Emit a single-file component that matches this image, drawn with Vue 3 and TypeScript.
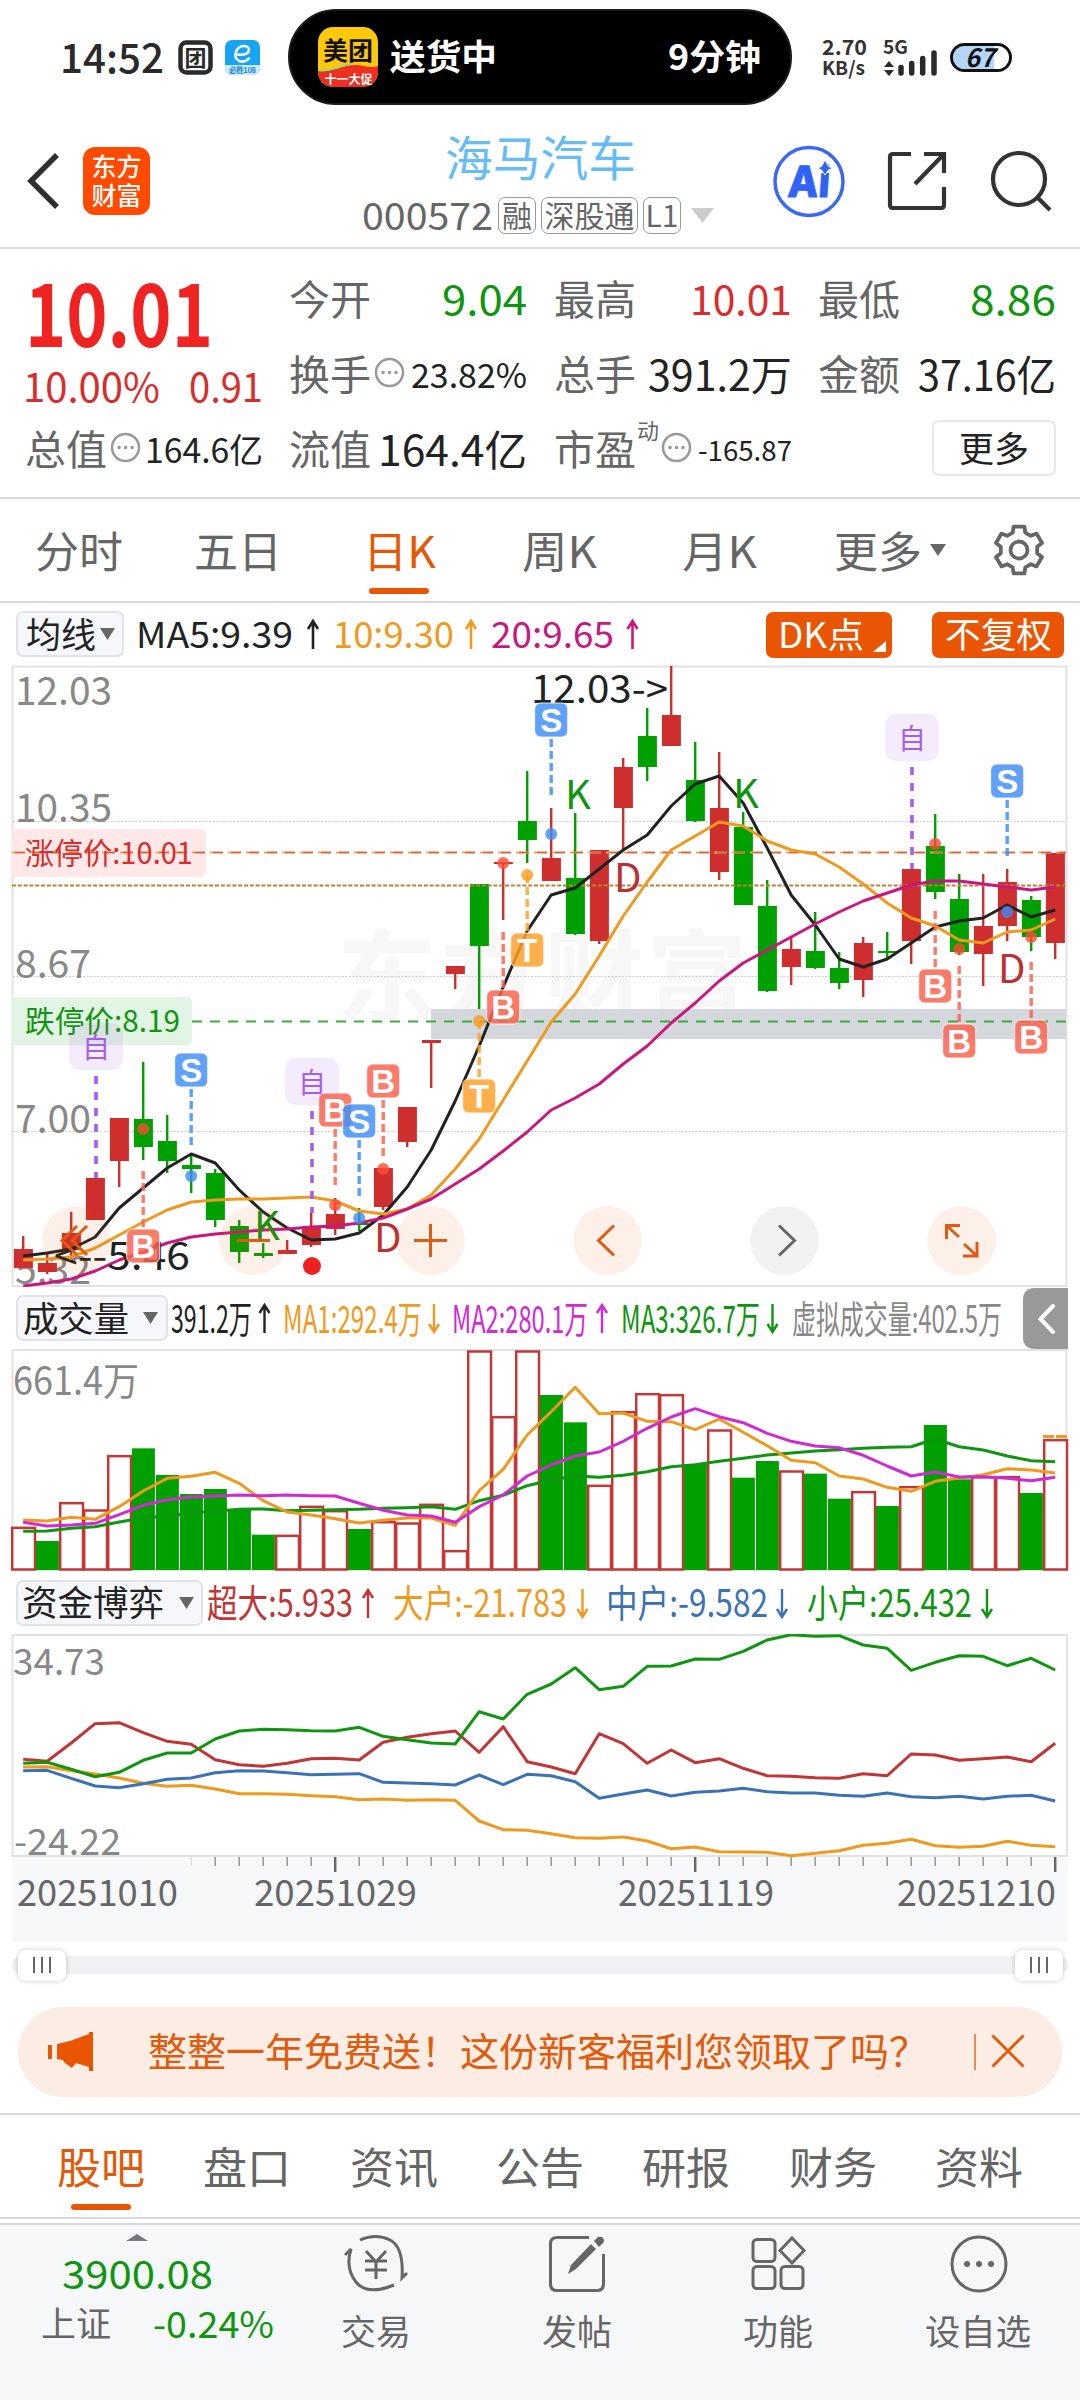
<script setup lang="ts">
import { defineComponent, h } from 'vue'

type Num = number

/* A single run of text set to an exact advance width. */
const Fit = defineComponent({
  props: {
    t: { type: String, required: true },
    w: { type: Number, required: true },
    s: { type: Number, required: true },
    c: { type: String, default: '#666' },
    b: { type: Number, default: 400 },
  },
  setup(p) {
    return () =>
      h('svg', { width: p.w, height: p.s, style: 'display:block;overflow:visible;flex:none' }, [
        h(
          'text',
          {
            x: 0,
            y: p.s * 0.88,
            fill: p.c,
            'font-size': p.s,
            'font-weight': p.b,
            textLength: p.w,
            lengthAdjust: 'spacingAndGlyphs',
          },
          p.t,
        ),
      ])
  },
})

const RED = '#cf2e2e'
const GREEN = '#00a000'
const step = 24
const x0 = 23.2
const cx = (i: Num) => +(x0 + i * step).toFixed(1)

/* [up(1)/down(0), high, bodyTop, bodyBottom, low] */
const candles: Num[][] = [
  [1, 1236, 1249, 1268, 1268], [1, 1253, 1263, 1272, 1274], [1, 1212, 1233, 1250, 1259], [1, 1178, 1178, 1220, 1220],
  [1, 1118, 1118, 1161, 1187], [0, 1062, 1119, 1147, 1160], [0, 1115, 1141, 1161, 1173], [0, 1155, 1165, 1169, 1193],
  [0, 1169, 1173, 1220, 1227], [0, 1220, 1226, 1252, 1263], [0, 1243, 1253, 1256, 1258], [1, 1240, 1250, 1254, 1254],
  [1, 1213, 1226, 1245, 1247], [1, 1198, 1214, 1229, 1235], [0, 1208, 1223, 1225, 1231], [1, 1168, 1168, 1207, 1210],
  [1, 1107, 1107, 1142, 1147], [1, 1040, 1040, 1043, 1088], [1, 966, 966, 974, 989], [0, 884, 884, 946, 1009],
  [1, 862, 862, 864, 920], [0, 771, 821, 840, 863], [1, 808, 858, 881, 881], [0, 813, 878, 934, 935],
  [1, 850, 850, 941, 944], [1, 758, 767, 808, 849], [0, 708, 736, 767, 781], [1, 666, 715, 746, 746],
  [0, 742, 780, 821, 822], [1, 752, 808, 872, 880], [0, 812, 827, 905, 905], [0, 880, 906, 991, 992],
  [1, 937, 949, 967, 985], [0, 912, 951, 968, 969], [0, 952, 968, 983, 989], [1, 937, 943, 980, 997],
  [0, 932, 951, 953, 958], [1, 869, 869, 941, 964], [0, 814, 846, 892, 899], [0, 874, 899, 952, 955],
  [1, 874, 926, 954, 986], [1, 869, 882, 926, 941], [0, 896, 900, 937, 951], [1, 853, 853, 943, 959],
]

const poly = (ys: Num[], f: (v: Num) => Num = (v) => v) => ys.map((v, i) => `${cx(i)},${f(v).toFixed(1)}`).join(' ')

const ma5 = poly([1256, 1253, 1249, 1237, 1208, 1188, 1168, 1154, 1163, 1190, 1212, 1228, 1240, 1239, 1233, 1215, 1187, 1150, 1101, 1046, 987, 931, 895, 888, 869, 850, 835, 806, 784, 776, 803, 848, 895, 925, 959, 967, 959, 943, 927, 921, 918, 905, 917, 910])
const ma10 = poly([1260, 1259, 1257, 1248, 1235, 1222, 1210, 1202, 1200, 1199, 1199, 1198, 1197, 1201, 1211, 1214, 1209, 1195, 1169, 1139, 1100, 1061, 1022, 994, 956, 916, 882, 850, 836, 822, 826, 841, 850, 854, 867, 884, 903, 918, 926, 940, 943, 932, 930, 919])
const ma20 = poly([1286, 1283, 1279, 1271, 1260, 1252, 1243, 1237, 1234, 1232, 1230, 1229, 1227, 1226, 1223, 1218, 1209, 1199, 1184, 1169, 1151, 1132, 1110, 1098, 1084, 1064, 1046, 1023, 1003, 981, 963, 950, 937, 924, 912, 901, 893, 885, 881, 881, 884, 887, 890, 887])

const K = { B: '#fb6350', S: '#418ff8', T: '#ffa028', Z: '#a55fe6' }
const DOT = { B: '#fa4b32', S: '#3c8cf5', T: '#fa9b1e', Z: '#a55fe6' }
type Mark = { k: 'B' | 'S' | 'T'; i: Num; y: Num; a: Num; b: Num; d: Num }
const marks: Mark[] = [
  { k: 'B', i: 5, y: 1246, a: 1171, b: 1227, d: 1129 },
  { k: 'S', i: 7, y: 1070, a: 1089, b: 1147, d: 1176 },
  { k: 'B', i: 13, y: 1110, a: 1129, b: 1186, d: 1205 },
  { k: 'S', i: 14, y: 1121, a: 1140, b: 1196, d: 1218 },
  { k: 'B', i: 15, y: 1081, a: 1100, b: 1156, d: 1169 },
  { k: 'T', i: 21, y: 950, a: 875, b: 931, d: 875 },
  { k: 'T', i: 19, y: 1096, a: 1021, b: 1077, d: 1021 },
  { k: 'B', i: 20, y: 1007, a: 932, b: 988, d: 863 },
  { k: 'S', i: 22, y: 720, a: 739, b: 795, d: 834 },
  { k: 'S', i: 41, y: 781, a: 800, b: 856, d: 912 },
  { k: 'B', i: 38, y: 986, a: 911, b: 967, d: 844 },
  { k: 'B', i: 39, y: 1041, a: 966, b: 1022, d: 949 },
  { k: 'B', i: 42, y: 1037, a: 962, b: 1018, d: 937 },
]
const notes = [
  { x: 96, top: 1023, end: 1178 },
  { x: 312, top: 1058, end: 1213 },
  { x: 912, top: 714, end: 869 },
]
const letters = [
  { t: 'K', x: 254, y: 1240 }, { t: 'K', x: 565, y: 809 }, { t: 'K', x: 733, y: 808 },
  { t: 'D', x: 374, y: 1252 }, { t: 'D', x: 614, y: 892 }, { t: 'D', x: 998, y: 983 },
]
const axis = [
  { t: '12.03', y: 705, w: 97 }, { t: '10.35', y: 822, w: 97 }, { t: '8.67', y: 978, w: 76 },
  { t: '7.00', y: 1133, w: 76 }, { t: '5.32', y: 1284, w: 76 },
]

/* volume: [up/down, top offset] where y = 1340 + v / 3 */
const third = (o: Num) => (v: Num) => o + v / 3
const vy = third(1340)
const vols: Num[][] = [
  [1, 562], [0, 603], [1, 488], [1, 510], [1, 347], [0, 325], [0, 405], [0, 462], [0, 447], [0, 508], [0, 584], [1, 586],
  [1, 499], [1, 512], [0, 567], [1, 545], [1, 549], [1, 493], [1, 632], [1, 33], [1, 230], [1, 33], [0, 165], [0, 247],
  [1, 436], [1, 215], [1, 161], [1, 164], [0, 372], [1, 270], [0, 413], [0, 363], [1, 393], [0, 401], [0, 476], [1, 455],
  [0, 498], [1, 440], [0, 255], [0, 418], [1, 410], [1, 410], [0, 459], [1, 299],
]
const v1 = poly([540, 543, 532, 538, 500, 453, 415, 409, 397, 430, 482, 516, 525, 536, 549, 541, 534, 534, 556, 452, 388, 285, 215, 142, 221, 219, 244, 245, 269, 237, 277, 317, 361, 368, 408, 417, 442, 454, 424, 414, 404, 386, 390, 399], vy)
const v2 = poly([547, 558, 555, 550, 524, 496, 479, 471, 468, 465, 467, 465, 467, 468, 490, 511, 525, 528, 547, 500, 465, 408, 375, 348, 336, 304, 265, 231, 206, 230, 248, 280, 304, 318, 323, 346, 378, 408, 396, 411, 410, 415, 422, 412], vy)
const v3 = poly([574, 573, 565, 560, 546, 534, 528, 519, 514, 508, 507, 512, 511, 509, 508, 505, 503, 500, 508, 482, 466, 437, 420, 408, 412, 406, 395, 380, 374, 364, 355, 345, 339, 333, 329, 325, 322, 320, 297, 320, 330, 348, 362, 365], vy)

const fy = third(1620)
const funds = [
  { c: '#ef9a1e', p: poly([441, 440, 452, 462, 474, 490, 499, 496, 507, 521, 521, 523, 527, 530, 539, 537, 541, 539, 541, 603, 629, 631, 641, 653, 655, 651, 663, 686, 681, 695, 696, 697, 707, 700, 692, 676, 670, 658, 677, 682, 679, 664, 676, 680], fy) },
  { c: '#3b72b4', p: poly([452, 451, 475, 498, 503, 491, 478, 474, 458, 452, 453, 458, 464, 463, 461, 487, 489, 491, 495, 465, 494, 463, 467, 485, 535, 522, 510, 528, 517, 513, 505, 515, 519, 519, 526, 529, 519, 530, 533, 529, 537, 529, 526, 543], fy) },
  { c: '#c03535', p: poly([418, 424, 369, 311, 308, 338, 364, 373, 419, 434, 439, 430, 416, 415, 420, 367, 352, 341, 333, 397, 320, 425, 441, 461, 341, 371, 430, 390, 428, 416, 445, 467, 469, 473, 475, 461, 467, 402, 405, 421, 416, 411, 425, 370], fy) },
  { c: '#109510', p: poly([430, 427, 448, 470, 457, 421, 399, 399, 357, 333, 328, 329, 332, 333, 322, 349, 359, 369, 372, 275, 297, 223, 192, 143, 209, 199, 139, 138, 117, 118, 94, 60, 44, 49, 47, 75, 85, 151, 127, 107, 109, 137, 115, 150], fy) },
]
const ticks = Array.from({ length: 37 }, (_, n) => n + 7)
const dates = [
  { t: '20251010', x: 17, w: 161 }, { t: '20251029', x: 254, w: 163 }, { t: '20251119', x: 618, w: 156 }, { t: '20251210', x: 897, w: 159 },
]

type Leg = { t: string; x: Num; w: Num; c: string; a?: 'u' | 'd'; ax?: Num }
const maLegend: Leg[] = [
  { t: 'MA5:9.39', x: 136, w: 157, c: '#222', a: 'u', ax: 313 },
  { t: '10:9.30', x: 333, w: 121, c: '#ef9a1e', a: 'u', ax: 471 },
  { t: '20:9.65', x: 491, w: 123, c: '#c8177f', a: 'u', ax: 632.5 },
]
const volLegend: Leg[] = [
  { t: '391.2万', x: 171, w: 81, c: '#222', a: 'u', ax: 264.5 },
  { t: 'MA1:292.4万', x: 283, w: 139, c: '#ef9a1e', a: 'd', ax: 434 },
  { t: 'MA2:280.1万', x: 452, w: 136, c: '#cf2bd2', a: 'u', ax: 602 },
  { t: 'MA3:326.7万', x: 621, w: 139, c: '#109510', a: 'd', ax: 772.5 },
  { t: '虚拟成交量:402.5万', x: 792, w: 210, c: '#888' },
]
const fundLegend: Leg[] = [
  { t: '超大:5.933', x: 207, w: 146, c: '#c03535', a: 'u', ax: 368 },
  { t: '大户:-21.783', x: 393, w: 174, c: '#ef9a1e', a: 'd', ax: 582.5 },
  { t: '中户:-9.582', x: 606, w: 162, c: '#3b72b4', a: 'd', ax: 782 },
  { t: '小户:25.432', x: 807, w: 165, c: '#109510', a: 'd', ax: 987 },
]
const arrow = (d: string, x: Num, base: Num) =>
  d === 'u' ? `M${x},${base + 1}V${base - 26}M${x - 5},${base - 19}L${x},${base - 27}L${x + 5},${base - 19}`
            : `M${x},${base - 28}V${base - 1}M${x - 5},${base - 8}L${x},${base}L${x + 5},${base - 8}`

const periods = [
  { t: '分时', w: 88, g: 35 }, { t: '五日', w: 88, g: 71 }, { t: '日K', w: 73, g: 81, on: true },
  { t: '周K', w: 75, g: 86 }, { t: '月K', w: 75, g: 85 }, { t: '更多', w: 88, g: 77 },
]
const gear = Array.from({ length: 6 }, (_, k) => {
  const pt = (r: Num, deg: Num) => {
    const a = ((k * 60 - 90 + deg) * Math.PI) / 180
    return `${(r * Math.cos(a)).toFixed(1)},${(r * Math.sin(a)).toFixed(1)}`
  }
  return [pt(18.5, -20), pt(24, -13), pt(24, 13), pt(18.5, 20)].join(' ')
}).join(' ')

const cols = [
  [
    { l: '今开', v: '9.04', w: 85, s: 41, c: '#109510' },
    { l: '换手', info: true, v: '23.82%', w: 116, s: 34, c: '#222' },
    { l: '流值', v: '164.4亿', w: 149, s: 42, c: '#222' },
  ],
  [
    { l: '最高', v: '10.01', w: 102, s: 41, c: '#d92c2c' },
    { l: '总手', v: '391.2万', w: 144, s: 42, c: '#222' },
    { l: '市盈', sup: '动', info: true, v: '-165.87', w: 94, s: 28, c: '#222' },
  ],
  [
    { l: '最低', v: '8.86', w: 86, s: 41, c: '#109510' },
    { l: '金额', v: '37.16亿', w: 138, s: 42, c: '#222' },
    { l: '', v: '更多', w: 70, s: 35, c: '#222' },
  ],
]
const sections = ['股吧', '盘口', '资讯', '公告', '研报', '财务', '资料']
</script>

<template>
  <main class="page">
    <div class="status">
      <Fit class="time" t="14:52" :w="104" :s="41" c="#2a2a2a" :b="500" />
      <svg class="st-a" width="35" height="35" viewBox="0 0 35 35">
        <rect x="2.5" y="2.5" width="30" height="30" rx="6" fill="none" stroke="#2a2a2a" stroke-width="4.5" />
        <text x="6.5" y="25.5" font-size="22" font-weight="700" fill="#2a2a2a">团</text>
      </svg>
      <svg class="st-b" width="35" height="35" viewBox="0 0 35 35">
        <rect width="35" height="35" rx="7" fill="#16a5f3" />
        <path d="M0 25H35V28a7 7 0 0 1-7 7H7a7 7 0 0 1-7-7Z" fill="#cdeaf9" />
        <path d="M12 14.5c8 1 12-1 12-5s-10-6.500-13 2.500 7 12.500 13 6.500" fill="none" stroke="#fff" stroke-width="2.500" stroke-linecap="round" />
        <text x="4" y="33" font-size="7.500" font-weight="700" fill="#1688d8" textLength="27">必胜108</text>
      </svg>
      <div class="island">
        <svg width="60" height="60" viewBox="0 0 60 60">
          <rect width="60" height="60" rx="15" fill="#ffc90a" />
          <path d="M0 44C14 46 24 38 36 38S50 42 60 39V45a15 15 0 0 1-15 15H15A15 15 0 0 1 0 45Z" fill="#ec2f1e" />
          <path d="M0 43C14 45 22 37 35 37" fill="none" stroke="#9edb6a" stroke-width="2" />
          <text x="5" y="33" font-size="25" font-weight="700" fill="#111" textLength="50">美团</text>
          <text x="6.500" y="56.500" font-size="12" font-weight="700" fill="#fff" textLength="48">十一大促</text>
        </svg>
        <Fit class="isl-t" t="送货中" :w="107" :s="35.500" c="#fff" :b="700" />
        <Fit class="isl-m" t="9分钟" :w="93" :s="35.500" c="#fff" :b="700" />
      </div>
      <div class="net">
        <Fit t="2.70" :w="45" :s="21" c="#333" :b="700" />
        <Fit t="KB/s" :w="43" :s="19" c="#333" :b="700" />
      </div>
      <svg class="signal" width="54" height="44" viewBox="884 35 54 44">
        <text x="883" y="54" font-size="19" font-weight="700" fill="#333" textLength="25" lengthAdjust="spacingAndGlyphs">5G</text>
        <path d="M889 61l5 6h-10zM889 76l5-6h-10z" fill="#2a2a2a" />
        <path d="M901 67.500V73M911.700 63.500V73M922.700 58.500V73M934 53V73" stroke="#2a2a2a" stroke-width="5.500" stroke-linecap="round" />
      </svg>
      <svg class="battery" width="62" height="29" viewBox="0 0 62 29">
        <rect x="1.500" y="1.500" width="59" height="26" rx="13" fill="#fff" />
        <path d="M14.500 1.500H44V27.500H14.500a13 13 0 0 1 0-26Z" fill="#b4d6fa" />
        <rect x="1.500" y="1.500" width="59" height="26" rx="13" fill="none" stroke="#111" stroke-width="3" />
        <text x="15" y="24" font-size="26" font-weight="700" font-style="italic" fill="#111" textLength="30" lengthAdjust="spacingAndGlyphs">67</text>
      </svg>
    </div>

    <header class="head">
      <div class="head-l">
        <svg class="back" width="34" height="58" viewBox="0 0 34 58"><path d="M31 3L5 29L31 55" fill="none" stroke="#2f2f2f" stroke-width="5.500" /></svg>
        <svg width="67" height="68" viewBox="0 0 67 68">
          <rect width="67" height="68" rx="12" fill="#ff4a00" />
          <text x="8.500" y="28.500" font-size="25" font-weight="500" fill="#fff" textLength="50">东方</text>
          <text x="8.500" y="58" font-size="25" font-weight="500" fill="#fff" textLength="50">财富</text>
        </svg>
      </div>
      <div class="head-m">
        <Fit t="海马汽车" :w="191" :s="47.500" c="#66bdf5" />
        <div class="code">
          <Fit t="000572" :w="131" :s="38" c="#666" />
          <span class="tag t1">融</span><span class="tag t3">深股通</span><span class="tag t2">L1</span>
          <svg class="drop" width="23" height="15"><path d="M0 0H23L11.500 15Z" fill="#ccc" /></svg>
        </div>
      </div>
      <div class="head-r">
        <svg width="72" height="73" viewBox="0 0 72 73">
          <circle cx="36" cy="36.500" r="34" fill="#fff" stroke="#3a68f2" stroke-width="3.500" />
          <text class="ai" transform="translate(14 52) skewX(-4)" font-size="43" font-weight="800" fill="#2f63f5" stroke="#2f63f5" stroke-width="1" textLength="42" lengthAdjust="spacingAndGlyphs">Ai</text>
          <path d="M52 15l3.500 6.500 4.500 1.500-4.500 2-3.500 5-3.500-5-4-2 4-1.500z" fill="#2f63f5" stroke="#fff" stroke-width="1" />
        </svg>
        <svg class="share" width="60" height="60" viewBox="-30 -30 60 60" fill="none" stroke="#333" stroke-width="4.200">
          <path d="M-6-27H-24q-3 0-3 3V24q0 3 3 3H24q3 0 3-3V6M-2 3L26-26M7-27H27V-8" />
        </svg>
        <svg class="find" width="64" height="62" viewBox="0 0 64 62" fill="none" stroke="#333" stroke-width="4.200">
          <circle cx="29" cy="29" r="26" /><path d="M47 47L60 60" />
        </svg>
      </div>
    </header>

    <section class="quote">
      <div class="qcol q0">
        <div class="price"><Fit t="10.01" :w="188" :s="87" c="#f02323" :b="700" /></div>
        <div class="chg"><Fit t="10.00%" :w="137" :s="40" c="#d92c2c" /><Fit t="0.91" :w="74" :s="40" c="#d92c2c" /></div>
        <div class="cell">
          <Fit t="总值" :w="82" :s="41" />
          <svg class="info" width="31" height="31" viewBox="0 0 31 31"><circle cx="15.500" cy="15.500" r="13.500" fill="none" stroke="#999" stroke-width="2.500" /><path d="M9 15.500h.1M15.500 15.500h.1M22 15.500h.1" stroke="#999" stroke-width="3.500" stroke-linecap="round" /></svg>
          <Fit class="val" t="164.6亿" :w="118" :s="34" c="#222" />
        </div>
      </div>
      <div v-for="(col, k) in cols" :key="k" class="qcol">
        <div v-for="r in col" :key="r.v" class="cell">
          <template v-if="r.l">
            <Fit :t="r.l" :w="82" :s="41" />
            <Fit v-if="r.sup" class="sup" :t="r.sup" :w="22" :s="22" />
            <svg v-if="r.info" class="info" width="31" height="31" viewBox="0 0 31 31"><circle cx="15.500" cy="15.500" r="13.500" fill="none" stroke="#999" stroke-width="2.500" /><path d="M9 15.500h.1M15.500 15.500h.1M22 15.500h.1" stroke="#999" stroke-width="3.500" stroke-linecap="round" /></svg>
            <Fit class="val" :t="r.v" :w="r.w" :s="r.s" :c="r.c" />
          </template>
          <button v-else class="more"><Fit :t="r.v" :w="r.w" :s="r.s" :c="r.c" /></button>
        </div>
      </div>
    </section>

    <nav class="periods">
      <div v-for="p in periods" :key="p.t" class="period" :class="{ on: p.on }" :style="{ marginLeft: p.g + 'px' }">
        <Fit :t="p.t" :w="p.w" :s="43.500" :c="p.on ? '#e45807' : '#666'" />
      </div>
      <svg class="tri" width="16" height="12"><path d="M0 0H16L8 12Z" fill="#666" /></svg>
      <svg class="gear" width="52" height="56" viewBox="-26 -28 52 56" fill="none" stroke="#666" stroke-width="3.800" stroke-linejoin="round">
        <polygon :points="gear" /><circle r="8.500" />
      </svg>
    </nav>

    <div class="legend l1">
      <button class="pick p1"><Fit t="均线" :w="70" :s="35" c="#222" /><svg width="15" height="12"><path d="M0 0H15L7.500 12Z" fill="#666" /></svg></button>
      <svg class="legend-t" width="634" height="62" viewBox="132 603 634 62">
        <g v-for="g in maLegend" :key="g.t">
          <text :x="g.x" y="648" font-size="36" :fill="g.c" :textLength="g.w" lengthAdjust="spacingAndGlyphs">{{ g.t }}</text>
          <path :d="arrow(g.a!, g.ax!, 648)" :stroke="g.c" stroke-width="2.600" fill="none" />
        </g>
      </svg>
      <button class="solid dk"><Fit t="DK点" :w="86" :s="35" c="#fff" /><svg width="13" height="11"><path d="M13 0V11H0Z" fill="#fff" /></svg></button>
      <button class="solid fq"><Fit t="不复权" :w="107" :s="35" c="#fff" /></button>
    </div>

    <svg class="chart" width="1080" height="622" viewBox="0 665 1080 622">
      <text x="337" y="1014" font-size="100" font-weight="700" fill="#f7f7f7" textLength="410">东方财富</text>
      <path d="M12.500 1286V666.500H1066.500V1286Z" fill="none" stroke="#e2e2e2" stroke-width="2" />
      <path d="M13 821.500H1066M13 976.500H1066M13 1131.500H1066" stroke="#ccc" stroke-width="1" stroke-dasharray="2 1.500" />
      <rect x="431" y="1009" width="635" height="30" fill="#d4d7dc" />
      <path d="M192 1021.500H1066" stroke="#3cab3c" stroke-width="1.800" stroke-dasharray="10 8" />
      <path d="M12 829H200q6 0 6 6V871q0 6-6 6H12Z" fill="#fee8e8" />
      <path d="M12 997H186q6 0 6 6V1039q0 6-6 6H12Z" fill="#e2f4e4" />
      <text v-for="a in axis" :key="a.t" x="15" :y="a.y" font-size="39.500" fill="#888" :textLength="a.w" lengthAdjust="spacingAndGlyphs">{{ a.t }}</text>

      <text x="531" y="703" font-size="39" fill="#222" textLength="137" lengthAdjust="spacingAndGlyphs">12.03-&gt;</text>
      <g v-for="(k, i) in candles" :key="i" :fill="k[0] ? RED : GREEN">
        <rect :x="cx(i) - 1.200" :y="k[1]" width="2.400" :height="k[4] - k[1]" />
        <rect :x="cx(i) - 9.300" :y="k[2]" width="19" :height="k[3] - k[2]" />
      </g>
      <path d="M12 852.500H1066" stroke="#e0ae68" stroke-width="1.800" stroke-dasharray="13 5" />
      <path d="M12 852.500H1066" stroke="#d95540" stroke-opacity=".85" stroke-width="1.500" stroke-dasharray="10 8" stroke-dashoffset="-3" />
      <path d="M12 885.500H1066" stroke="#bb8136" stroke-width="1.800" stroke-dasharray="4 1.800" />
      <text x="25" y="864" font-size="30" fill="#d92c2c" textLength="168" lengthAdjust="spacingAndGlyphs">涨停价:10.01</text>
      <text x="25" y="1032" font-size="30" fill="#109510" textLength="155" lengthAdjust="spacingAndGlyphs">跌停价:8.19</text>

      <g fill="none" stroke-width="3" stroke-linejoin="round">
        <polyline :points="ma5" stroke="#222" />
        <polyline :points="ma10" stroke="#ef9a1e" />
        <polyline :points="ma20" stroke="#c8177f" />
      </g>
      <text x="54" y="1270" font-size="39" fill="#222" textLength="136" lengthAdjust="spacingAndGlyphs">&lt;--5.46</text>
      <circle cx="312" cy="1266" r="9" fill="#f02020" />
      <text v-for="(l, n) in letters" :key="n" :x="l.x" :y="l.y" font-size="40" :fill="l.t === 'K' ? '#109510' : '#bb3030'">{{ l.t }}</text>

      <g v-for="n in notes" :key="n.x">
        <rect :x="n.x - 27" :y="n.top" width="54" height="47" rx="11" fill="#a55fe6" fill-opacity=".12" />
        <text :x="n.x - 14" :y="n.top + 35" font-size="28" fill="#a55fe6">自</text>
        <path :d="`M${n.x},${n.top + 53}V${n.end}`" stroke="#a55fe6" stroke-width="3.600" stroke-dasharray="8 8" />
      </g>
      <g v-for="m in marks" :key="m.k + m.i">
        <path :d="`M${cx(m.i)},${m.a}V${m.b}`" :stroke="K[m.k]" stroke-opacity=".85" stroke-width="3.400" stroke-dasharray="8 4" />
        <circle :cx="cx(m.i)" :cy="m.d" r="6" :fill="DOT[m.k]" fill-opacity=".8" />
        <rect :x="cx(m.i) - 16.500" :y="m.y - 17" width="33" height="34" rx="6" :fill="K[m.k]" fill-opacity=".84" stroke="#fff" stroke-opacity=".8" stroke-width="1" />
        <text class="latin" :x="cx(m.i)" :y="m.y + 11.500" font-size="33" font-weight="700" fill="#fff" text-anchor="middle">{{ m.k }}</text>
      </g>

      <g fill="#ea5504" fill-opacity=".09">
        <circle cx="76" cy="1240.500" r="34.300" /><circle cx="253" cy="1240.500" r="34.300" /><circle cx="430.500" cy="1240.500" r="34.300" />
        <circle cx="607.500" cy="1240.500" r="34.300" /><circle cx="961.500" cy="1240.500" r="34.300" />
      </g>
      <circle cx="784.500" cy="1240.500" r="34.300" fill="#f2f2f2" />
      <g fill="none" stroke="#e05a14" stroke-width="3">
        <path d="M77 1226L62 1240.500L77 1255M87 1226L72 1240.500L87 1255" />
        <path d="M237 1240.500H270M414 1240.500H447M430.500 1224V1257" />
        <path d="M614 1225.500L598.500 1240.500L614 1255.500" />
        <path d="M959 1237L946.500 1225.500M946.500 1239V1225.500H960M964 1244L977 1256M977 1242V1256H963" />
      </g>
      <path d="M779 1225.500L794.500 1240.500L779 1255.500" fill="none" stroke="#666" stroke-width="3" />
    </svg>

    <div class="legend l2">
      <button class="pick p2"><Fit t="成交量" :w="106" :s="35" c="#222" /><svg width="15" height="12"><path d="M0 0H15L7.500 12Z" fill="#666" /></svg></button>
      <svg class="legend-t" width="855" height="62" viewBox="168 1287 855 62">
        <g v-for="g in volLegend" :key="g.t">
          <text :x="g.x" y="1333" font-size="38" :fill="g.c" :textLength="g.w" lengthAdjust="spacingAndGlyphs">{{ g.t }}</text>
          <path v-if="g.a" :d="arrow(g.a, g.ax!, 1332)" :stroke="g.c" stroke-width="2.400" fill="none" />
        </g>
      </svg>
      <svg width="45" height="62" viewBox="0 0 45 62"><path d="M45 1V62H12Q0 62 0 50V13Q0 1 12 1Z" fill="#999" /><path d="M30 19L17.500 32L30 45" fill="none" stroke="#fff" stroke-width="4" stroke-linecap="round" /></svg>
    </div>

    <svg class="chart" width="1080" height="222" viewBox="0 1349 1080 222">
      <path d="M12.500 1570V1350H1066.500V1570Z" fill="none" stroke="#e2e2e2" stroke-width="2" />
      <text x="13" y="1395" font-size="39" fill="#888" textLength="126" lengthAdjust="spacingAndGlyphs">661.4万</text>
      <template v-for="(v, i) in vols" :key="i">
        <rect v-if="v[0]" :x="cx(i) - 11" :y="vy(v[1]) + .5" width="22.800" :height="1569 - vy(v[1])" fill="#fff" stroke="#c23838" stroke-width="2.500" />
        <rect v-else :x="cx(i) - 11.300" :y="vy(v[1])" width="23" :height="1570 - vy(v[1])" :fill="GREEN" />
      </template>
      <path d="M1043 1436.500H1054M1056 1436.500H1067" stroke="#ef9a1e" stroke-width="3" />
      <g fill="none" stroke-width="3" stroke-linejoin="round">
        <polyline :points="v3" stroke="#109510" />
        <polyline :points="v1" stroke="#ef9a1e" />
        <polyline :points="v2" stroke="#cf2bd2" />
      </g>
    </svg>

    <div class="legend l3">
      <button class="pick p3"><Fit t="资金博弈" :w="142" :s="35" c="#222" /><svg width="15" height="12"><path d="M0 0H15L7.500 12Z" fill="#666" /></svg></button>
      <svg class="legend-t" width="855" height="63" viewBox="203 1571 855 63">
        <g v-for="g in fundLegend" :key="g.t">
          <text :x="g.x" y="1617" font-size="38" :fill="g.c" :textLength="g.w" lengthAdjust="spacingAndGlyphs">{{ g.t }}</text>
          <path :d="arrow(g.a!, g.ax!, 1617)" :stroke="g.c" stroke-width="2.400" fill="none" />
        </g>
      </svg>
    </div>

    <svg class="chart" width="1080" height="307" viewBox="0 1634 1080 307">
      <rect x="12" y="1857" width="1056" height="84" fill="#f7f8fa" />
      <path d="M12.500 1856V1635H1067V1856Z" fill="none" stroke="#e2e2e2" stroke-width="2" />
      <text x="13" y="1675" font-size="37" fill="#888" textLength="92" lengthAdjust="spacingAndGlyphs">34.73</text>
      <text x="14" y="1855" font-size="37" fill="#888" textLength="107" lengthAdjust="spacingAndGlyphs">-24.22</text>
      <polyline v-for="f in funds" :key="f.c" :points="f.p" fill="none" :stroke="f.c" stroke-width="3" stroke-linejoin="round" />
      <path v-for="i in ticks" :key="i" :d="`M${cx(i)},1857v${i % 15 === 13 ? 15 : 9}`" :stroke="i % 15 === 13 ? '#666' : i === 7 ? '#ddd' : '#888'" :stroke-width="i % 15 === 13 ? 2.5 : 1.3" />
      <text v-for="d in dates" :key="d.t" :x="d.x" y="1906" font-size="37" fill="#666" :textLength="d.w" lengthAdjust="spacingAndGlyphs">{{ d.t }}</text>
    </svg>

    <div class="slider">
      <div class="track">
        <div class="knob"><i></i><i></i><i></i></div>
        <div class="knob"><i></i><i></i><i></i></div>
      </div>
    </div>

    <div class="banner">
      <svg width="46" height="40" viewBox="48 2032 46 40" fill="#ea5504"><path d="M48 2045h4v14h-4zM57 2044L70 2041L89 2034V2032H93V2071H89V2067L76 2063L72 2068L65 2063L63 2060L57 2059Z" /></svg>
      <Fit class="promo" t="整整一年免费送！这份新客福利您领取了吗？" :w="780" :s="39" c="#e25a0c" />
      <i class="sep"></i>
      <svg class="close" width="34" height="34" viewBox="0 0 34 34"><path d="M1.500 1.500L32.500 32.500M32.500 1.500L1.500 32.500" stroke="#e25a0c" stroke-width="3" /></svg>
    </div>

    <nav class="sections">
      <div v-for="(s, i) in sections" :key="s" class="sect" :class="{ on: i === 0 }">
        <Fit :t="s" :w="88" :s="43.500" :c="i === 0 ? '#e45807' : '#666'" />
      </div>
    </nav>

    <footer class="dock">
      <div class="index">
        <svg width="22" height="7"><path d="M0 7H22L11 0Z" fill="#777780" /></svg>
        <Fit class="ix" t="3900.08" :w="151" :s="39" c="#109510" />
        <div class="ixrow"><Fit t="上证" :w="70" :s="35" /><Fit t="-0.24%" :w="121" :s="37" c="#109510" /></div>
      </div>
      <div class="act">
        <svg viewBox="-34 -34 68 68"><path d="M-31-9L-25-15Q-31 4-20 18T18 21M-16-24Q0-31 14-24T26 14L31 9M-10-13L0-2L10-13M-11-3H11M-11 6H11M0-2V15" /></svg>
        <Fit t="交易" :w="70" :s="35" />
      </div>
      <div class="act">
        <svg viewBox="-34 -34 68 68"><path d="M12-26.500H-20q-6.500 0-6.500 6.500V20q0 6.500 6.500 6.500H20q6.500 0 6.500-6.500V-10" /><path class="f" d="M-9 10L-6 1L14-20L19-15L-1 5ZM17-23L21-27Q24-28 26-26Q28-23 26-21L22-17Z" /></svg>
        <Fit t="发帖" :w="70" :s="35" />
      </div>
      <div class="act">
        <svg viewBox="-34 -34 68 68"><rect x="-25" y="-24.500" width="22" height="22" rx="4" /><rect x="-25" y="2.500" width="22" height="22" rx="4" /><rect x="3" y="2.500" width="22" height="22" rx="4" /><path d="M14-26L26-13.500L14-1L2-13.500Z" /></svg>
        <Fit t="功能" :w="70" :s="35" />
      </div>
      <div class="act last">
        <svg viewBox="-34 -34 68 68"><circle r="27" /><path class="f" d="M-15 0a3 3 0 0 1 6 0a3 3 0 0 1-6 0M-3 0a3 3 0 0 1 6 0a3 3 0 0 1-6 0M9 0a3 3 0 0 1 6 0a3 3 0 0 1-6 0" /></svg>
        <Fit t="设自选" :w="106" :s="35" />
      </div>
    </footer>
  </main>
</template>

<style>
body { background: #fff; }
</style>

<style scoped>
.page { width: 1080px; height: 2400px; overflow: hidden; background: #fff; font-family: "Noto Sans CJK SC", "Noto Sans", sans-serif; display: flex; flex-direction: column; }
.page > * { flex: none; }
svg { display: block; flex: none; }
button { font: inherit; margin: 0; padding: 0; border: 0; background: none; box-sizing: border-box; display: flex; align-items: center; }
.latin { font-family: "Liberation Sans", Arial, sans-serif; }
.ai { font-family: Inter, sans-serif; }

.status { height: 105px; padding-top: 9px; box-sizing: border-box; display: flex; align-items: center; padding-left: 60px; }
.st-a { margin-left: 14px; }
.st-b { margin-left: 12px; }
.island { width: 504px; height: 96px; box-sizing: border-box; border-radius: 48px; background: #000; border: 2px solid #1c1c1c; margin-left: 28px; padding: 0 29px 0 28px; display: flex; align-items: center; }
.isl-t { margin-left: 12px; }
.isl-m { margin-left: auto; }
.net { margin-left: 30px; width: 46px; display: flex; flex-direction: column; }
.signal { margin-left: 16px; overflow: visible; }
.battery { margin-left: 12px; }

.head { height: 144px; box-sizing: border-box; border-bottom: 2px solid #d9d9d9; display: flex; padding-top: 4px; }
.head-l { width: 362px; height: 144px; display: flex; align-items: center; padding-left: 26px; box-sizing: border-box; }
.back { margin-right: 23px; }
.head-m { width: 356px; display: flex; flex-direction: column; align-items: center; padding-top: 25px; }
.code { display: flex; align-items: center; height: 38px; width: 356px; margin-top: 15px; }
.tag { box-sizing: border-box; height: 37px; border: 1.5px solid #999; border-radius: 7px; color: #666; font-size: 30px; line-height: 33px; text-align: center; margin-left: 5px; white-space: nowrap; }
.t1 { width: 38px; }
.t3 { width: 97px; }
.t2 { width: 38px; }
.drop { margin-left: 10px; }
.head-r { height: 144px; display: flex; align-items: center; margin-left: 55px; }
.share { margin-left: 42px; }
.find { margin-left: 43px; }

.quote { height: 250px; box-sizing: border-box; border-bottom: 2px solid #d9d9d9; padding: 13px 24px 0 25px; display: flex; justify-content: space-between; }
.qcol { width: 238px; }
.price { height: 103px; display: flex; align-items: center; }
.chg { height: 44px; margin-bottom: 3px; display: flex; align-items: center; justify-content: space-between; margin-left: -2px; }
.cell { height: 75px; display: flex; align-items: center; }
.val { margin-left: auto; }
.info { margin: -5px 0 0 3px; }
.sup { margin: -38px 0 0 1px; }
.sup + .info { margin-left: 2px; }
.more { margin-left: auto; width: 124px; height: 56px; border: 2px solid #e8e8e8; border-radius: 7px; justify-content: center; margin-top: -3px; }

.periods { height: 104px; box-sizing: border-box; border-bottom: 2px solid #d9d9d9; display: flex; align-items: center; }
.period { height: 102px; padding-top: 4px; box-sizing: border-box; display: flex; align-items: center; position: relative; }
.period.on::after { content: ""; position: absolute; left: 6px; bottom: 7px; width: 60px; height: 6px; border-radius: 3px; background: #ea5504; }
.tri { margin-left: 8px; }
.gear { margin-left: 47px; }

.legend { height: 62px; display: flex; align-items: center; padding-left: 16px; }
.legend-t { overflow: visible; }
.pick { height: 46px; background: #f6f7fa; border: 2px solid #e0e3e8; border-radius: 7px; justify-content: space-between; flex: none; }
.p1 { width: 108px; padding: 0 7px 0 8px; }
.p2 { width: 152px; padding: 0 8px 0 5px; }
.p3 { width: 187px; padding: 0 7px 0 4px; }
.l1 .pick { margin-right: 8px; }
.solid { height: 46px; background: #ea5504; border-radius: 7px; flex: none; margin-top: 1px; }
.dk { width: 126px; padding-left: 12px; }
.dk svg:last-child { margin: 23px 0 0 9px; }
.fq { width: 132px; margin-left: 40px; justify-content: center; }
.l3 { height: 63px; }

.slider { height: 66px; padding: 15px 12px 0; box-sizing: border-box; }
.track { height: 18px; border-radius: 9px; background: #f0f1f3; display: flex; align-items: center; justify-content: space-between; padding: 0 5px 0 6px; }
.knob { width: 48px; height: 31px; border-radius: 8px; background: #fff; box-shadow: 0 0 5px rgba(0, 0, 0, .22); display: flex; align-items: center; justify-content: center; gap: 6px; }
.knob i { width: 2px; height: 16px; background: #666; }

.banner { margin: 0 18px; height: 90px; border-radius: 45px; background: #fcede4; display: flex; align-items: center; padding-left: 30px; }
.promo { margin-left: 54px; margin-top: -1px; }
.sep { width: 2px; height: 36px; background: #e88b57; margin-left: 46px; }
.close { margin-left: 15px; margin-top: -2px; }

.sections { margin-top: 16px; height: 106px; box-sizing: border-box; border-top: 2px solid #d9d9d9; border-bottom: 2px solid #d9d9d9; padding: 0 28px; display: flex; }
.sect { flex: 1; display: flex; justify-content: center; align-items: center; padding-top: 3px; position: relative; }
.sect.on::after { content: ""; position: absolute; left: 50%; margin-left: -30px; bottom: 7px; width: 60px; height: 6px; border-radius: 3px; background: #ea5504; }

.dock { margin-top: 4px; height: 177px; box-sizing: border-box; border-top: 2px solid #d9d9d9; background: #f6f7f9; display: flex; }
.index { width: 275px; display: flex; flex-direction: column; align-items: center; padding-top: 9px; }
.ix { margin-top: 14px; }
.ixrow { width: 233px; display: flex; align-items: center; justify-content: space-between; margin: 11px 0 0 41px; }
.act { width: 201.300px; display: flex; flex-direction: column; align-items: center; padding-top: 5px; gap: 16px; }
.act > svg:first-child { width: 68px; height: 68px; fill: none; stroke: #666; stroke-width: 3; }
.act .f { fill: #666; stroke: none; }
.last > svg:last-child { margin-left: -3px; }
</style>
